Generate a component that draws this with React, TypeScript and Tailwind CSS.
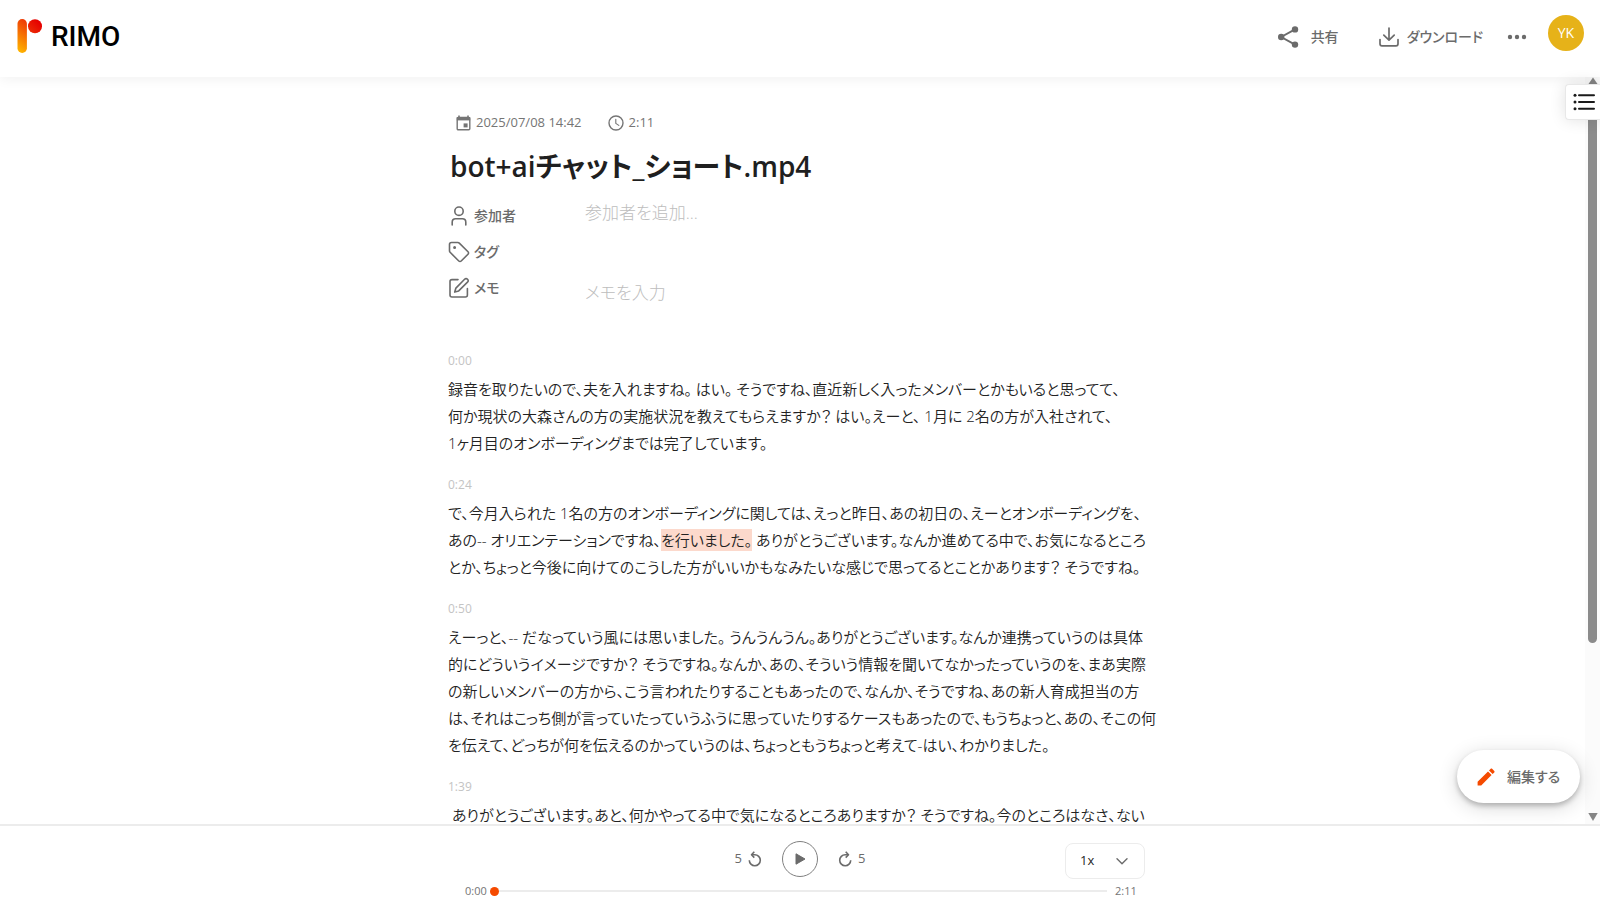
import { useState } from "react";

type Line = { text: string; mark?: string; rest?: string };
type Paragraph = { time: string; lines: Line[] };

const transcript: Paragraph[] = [
  {
    time: "0:00",
    lines: [
      { text: "録音を取りたいので、夫を入れますね。 はい。 そうですね、直近新しく入ったメンバーとかもいると思ってて、" },
      { text: "何か現状の大森さんの方の実施状況を教えてもらえますか？ はい。えーと、 1月に 2名の方が入社されて、" },
      { text: "1ヶ月目のオンボーディングまでは完了しています。" },
    ],
  },
  {
    time: "0:24",
    lines: [
      { text: "で、今月入られた 1名の方のオンボーディングに関しては、えっと昨日、あの初日の、えーとオンボーディングを、" },
      {
        text: "あの-- オリエンテーションですね、",
        mark: "を行いました。",
        rest: " ありがとうございます。なんか進めてる中で、お気になるところ",
      },
      { text: "とか、ちょっと今後に向けてのこうした方がいいかもなみたいな感じで思ってるとことかあります？ そうですね。" },
    ],
  },
  {
    time: "0:50",
    lines: [
      { text: "えーっと、-- だなっていう風には思いました。 うんうんうん。ありがとうございます。なんか連携っていうのは具体" },
      { text: "的にどういうイメージですか？ そうですね。なんか、あの、そういう情報を聞いてなかったっていうのを、まあ実際" },
      { text: "の新しいメンバーの方から、こう言われたりすることもあったので、なんか、そうですね、あの新人育成担当の方" },
      { text: "は、それはこっち側が言っていたっていうふうに思っていたりするケースもあったので、もうちょっと、あの、そこの何" },
      { text: "を伝えて、どっちが何を伝えるのかっていうのは、ちょっともうちょっと考えて-はい、わかりました。" },
    ],
  },
  {
    time: "1:39",
    lines: [
      { text: " ありがとうございます。あと、何かやってる中で気になるところありますか？ そうですね。今のところはなさ、ない" },
    ],
  },
];

const stroke = {
  fill: "none",
  stroke: "currentColor",
  strokeLinecap: "round" as const,
  strokeLinejoin: "round" as const,
};

function Logo() {
  return (
    <a href="#" className="flex items-center gap-2 text-black" aria-label="RIMO">
      <svg width="26" height="34" viewBox="0 0 26 34" aria-hidden="true">
        <defs>
          <linearGradient id="stem" x1="0.6" y1="0" x2="0.4" y2="1">
            <stop offset="0" stopColor="#ee3a06" />
            <stop offset="1" stopColor="#ffb400" />
          </linearGradient>
          <linearGradient id="dot" x1="0.8" y1="0.2" x2="0" y2="1">
            <stop offset="0" stopColor="#e60000" />
            <stop offset="1" stopColor="#ec3306" />
          </linearGradient>
        </defs>
        <rect x="0.5" y="0" width="9.4" height="34" rx="4.7" fill="url(#stem)" />
        <circle cx="18" cy="7.2" r="7" fill="url(#dot)" />
      </svg>
      <span className="pt-0.5 font-['Roboto',sans-serif] text-[28px] leading-8 font-medium">RIMO</span>
    </a>
  );
}

function Header() {
  return (
    <header className="relative z-10 flex h-[77px] shrink-0 items-start justify-between bg-white pr-4 pl-[17px] shadow-[0_2px_12px_rgba(0,0,0,0.06)]">
      <div className="pt-[19px]">
        <Logo />
      </div>
      <div className="flex items-start text-[#6b6b6b]">
        <button className="mt-[23px] flex h-7 items-center gap-3 text-sm font-medium">
          <svg width="22" height="24" viewBox="0 0 22 24" aria-hidden="true">
            <path d="M18 4.4 4.2 12 18 19.6" fill="none" stroke="currentColor" strokeWidth="1.9" />
            <circle cx="18" cy="4.4" r="3.2" fill="currentColor" />
            <circle cx="4.2" cy="12" r="3.2" fill="currentColor" />
            <circle cx="18" cy="19.6" r="3.2" fill="currentColor" />
          </svg>
          共有
        </button>
        <button className="mt-[23px] ml-10 flex h-7 items-center gap-2 text-sm font-medium">
          <svg width="20" height="20" viewBox="0 0 20 20" {...stroke} strokeWidth="1.7" aria-hidden="true">
            <path d="M1 12.5v4.2C1 18 1.9 18.8 3 18.8h14c1.1 0 2-.8 2-2.1v-4.2" />
            <path d="M10 1v12M4.8 8.200 10 13.200l5.200-5" />
          </svg>
          ダウンロード
        </button>
        <button className="mt-[23px] ml-6 flex h-7 items-center" aria-label="メニュー">
          <svg width="20" height="6" viewBox="0 0 20 6" fill="currentColor" aria-hidden="true">
            <circle cx="3" cy="3" r="2.2" />
            <circle cx="10" cy="3" r="2.2" />
            <circle cx="17" cy="3" r="2.2" />
          </svg>
        </button>
        <button className="mt-[15px] ml-[21px] flex size-9 items-center justify-center rounded-full bg-[#e6b219] font-['Open_Sans',sans-serif] text-sm text-white">
          YK
        </button>
      </div>
    </header>
  );
}

function Details() {
  return (
    <section>
      <div className="flex h-6 items-center gap-[26px] pl-2 text-[13px] text-[#757575]">
        <div className="flex items-center gap-[5px]">
          <svg width="15" height="16" viewBox="0 0 15 16" aria-hidden="true">
            <path d="M3 .5v2M12 .5v2" stroke="currentColor" strokeWidth="1.6" />
            <rect x="1.2" y="2.4" width="12.6" height="12.4" rx="1" fill="none" stroke="currentColor" strokeWidth="1.4" />
            <path d="M.8 2h13.400v3.400H.8z" fill="currentColor" />
            <path d="M7.600 8.400h4v4h-4z" fill="currentColor" />
          </svg>
          <time>2025/07/08 14:42</time>
        </div>
        <div className="flex items-center gap-[5px]">
          <svg width="16" height="16" viewBox="0 0 16 16" {...stroke} strokeWidth="1.4" aria-hidden="true">
            <circle cx="8" cy="8" r="7" />
            <path d="M7.800 4.200v4.200l3 2" strokeWidth="1.1" />
          </svg>
          <span>2:11</span>
        </div>
      </div>
      <h1 className="mt-[11px] pl-0.5 text-[28px] leading-10 font-semibold whitespace-nowrap text-[#1f1f1f]">
        bot+aiチャット_ショート.mp4
      </h1>
      <div className="mt-4 grid grid-cols-[137px_1fr] gap-y-2 text-sm text-[#6b6b6b]">
        <label htmlFor="members" className="flex h-7 items-center gap-1 font-medium">
          <svg width="22" height="22" viewBox="0 0 22 22" {...stroke} strokeWidth="1.6" aria-hidden="true">
            <circle cx="11" cy="6.2" r="4.2" />
            <path d="M4.200 20v-2.800c0-2 1.600-3.400 3.400-3.400h6.800c1.800 0 3.400 1.400 3.400 3.400V20" />
          </svg>
          参加者
        </label>
        <input
          id="members"
          placeholder="参加者を追加..."
          className="h-[22px] bg-transparent text-[17px] font-light outline-none placeholder:text-[#bdbdbd]"
        />
        <div className="flex h-7 items-center gap-1 font-medium">
          <svg width="22" height="22" viewBox="0 0 22 22" {...stroke} strokeWidth="1.6" aria-hidden="true">
            <path d="M1.500 3.500c0-1.100.9-2 2-2h6.300c.6 0 1.100.2 1.500.6l8.700 8.700c.7.700.7 1.700 0 2.400l-6.800 6.800c-.7.700-1.700.7-2.400 0L2.100 11.300c-.4-.4-.6-.9-.6-1.500z" />
            <circle cx="6.6" cy="6.6" r="0.7" fill="currentColor" />
          </svg>
          タグ
        </div>
        <div />
        <label htmlFor="memo" className="flex h-7 items-center gap-1 font-medium">
          <svg width="22" height="22" viewBox="0 0 22 22" {...stroke} strokeWidth="1.6" aria-hidden="true">
            <path d="M10 2.600H4c-1.100 0-2 .9-2 2V18c0 1.100.9 2 2 2h13.400c1.100 0 2-.9 2-2v-6.500" />
            <path d="M16.600 2.200c.8-.8 2.100-.8 2.900 0s.8 2.100 0 2.900l-8.800 8.800-4 1.200 1.200-4z" />
          </svg>
          メモ
        </label>
        <textarea
          id="memo"
          placeholder="メモを入力"
          rows={1}
          className="mt-[3px] h-8 resize-none bg-transparent text-[17px] leading-8 font-light outline-none placeholder:text-[#bdbdbd]"
        />
      </div>
    </section>
  );
}

function Transcript() {
  return (
    <section className="mt-10">
      {transcript.map((p) => (
        <article key={p.time} className="pb-4">
          <time className="block h-[27px] text-xs leading-6 text-[#c4c4c4]">{p.time}</time>
          <p className="text-[15px] leading-[27px] font-[350] whitespace-pre text-[#222]">
            {p.lines.map((l) => (
              <span key={l.text} className="block">
                {l.text}
                {l.mark && <mark className="bg-[#fcd9cc] py-px text-inherit">{l.mark}</mark>}
                {l.rest}
              </span>
            ))}
          </p>
        </article>
      ))}
    </section>
  );
}

function ScrollRail() {
  return (
    <div className="flex w-[15px] shrink-0 flex-col items-center justify-between bg-[#fbfbfb] text-[#858585]" aria-hidden="true">
      <svg width="10" height="7" viewBox="0 0 10 7" fill="currentColor">
        <path d="M5 .5 9.500 7h-9z" />
      </svg>
      <div className="w-[9px] grow-[560] rounded-full bg-[#8b8b8b]" />
      <div className="grow-[170]" />
      <svg width="10" height="11" viewBox="0 0 10 11" fill="currentColor">
        <path d="M.3 0h9.400L5 8z" />
      </svg>
    </div>
  );
}

function Player() {
  const [position, setPosition] = useState(0);
  return (
    <footer className="h-[88px] shrink-0 border-t-2 border-[#ececec] bg-white text-[#6b6b6b]">
      <div className="mx-auto max-w-[690px] pt-[13px]">
        <div className="grid grid-cols-[1fr_auto_1fr] items-center">
          <div />
          <div className="flex items-center gap-5 text-[13px]">
            <button className="flex items-center gap-1.5" aria-label="5秒戻る">
              5
              <svg width="14" height="16" viewBox="0 0 14 16" {...stroke} strokeLinecap="butt" strokeWidth="1.6" aria-hidden="true">
                <path d="M1.300 9.200A5.500 5.500 0 1 0 6.800 3.700H4" />
                <path d="M6.300.8 3.500 3.700l2.800 2.900" />
              </svg>
            </button>
            <button
              className="flex size-9 items-center justify-center rounded-full border border-[#808080]"
              aria-label="再生"
            >
              <svg width="12" height="12" viewBox="0 0 12 12" aria-hidden="true">
                <path d="M2 .8v10.400L11 6z" fill="currentColor" stroke="currentColor" strokeLinejoin="round" />
              </svg>
            </button>
            <button className="flex items-center gap-1.5" aria-label="5秒進む">
              <svg width="14" height="16" viewBox="0 0 14 16" {...stroke} strokeLinecap="butt" strokeWidth="1.6" aria-hidden="true">
                <path d="M12.700 9.200A5.500 5.500 0 1 1 7.200 3.700H10" />
                <path d="M7.700.8l2.800 2.900-2.800 2.900" />
              </svg>
              5
            </button>
          </div>
          <div className="relative mt-1 justify-self-end">
            <select
              aria-label="再生速度"
              className="h-9 w-20 appearance-none rounded-lg border border-[#ececec] bg-white pl-3.5 text-[13px] text-[#1f1f1f] outline-none"
            >
              <option>1x</option>
              <option>1.5x</option>
              <option>2x</option>
            </select>
            <svg
              className="pointer-events-none absolute top-[15px] right-[17px]"
              width="12"
              height="7"
              viewBox="0 0 12 7"
              {...stroke}
              strokeWidth="1.4"
              aria-hidden="true"
            >
              <path d="m1 .8 5 5 5-5" />
            </svg>
          </div>
        </div>
        <div className="mt-1 flex h-4 items-center px-2.5 text-[11px] text-[#757575]">
          <span className="w-[25px]">0:00</span>
          <input
            type="range"
            aria-label="再生位置"
            min={0}
            max={131}
            value={position}
            onChange={(e) => setPosition(Number(e.target.value))}
            className="h-[9px] min-w-0 flex-1 appearance-none bg-transparent [&::-webkit-slider-runnable-track]:h-[2px] [&::-webkit-slider-runnable-track]:bg-[#ececec] [&::-webkit-slider-thumb]:-mt-[3.5px] [&::-webkit-slider-thumb]:size-[9px] [&::-webkit-slider-thumb]:appearance-none [&::-webkit-slider-thumb]:rounded-full [&::-webkit-slider-thumb]:bg-[#f54a00]"
          />
          <span className="ml-2 w-5">2:11</span>
        </div>
      </div>
    </footer>
  );
}

export default function App() {
  return (
    <div className="flex h-screen flex-col overflow-hidden bg-white font-['Open_Sans','Noto_Sans_CJK_JP',sans-serif] [font-feature-settings:'palt']">
      <Header />
      <div className="relative flex min-h-0 flex-1">
        <main className="min-w-0 flex-1 overflow-hidden">
          <div className="mx-auto max-w-[689px] pt-[34px]">
            <Details />
            <Transcript />
          </div>
        </main>
        <ScrollRail />
        <button
          aria-label="目次"
          className="absolute top-[7px] right-0 z-20 flex h-9 w-[35px] items-center justify-center rounded-l border border-r-0 border-[#e8e8e8] bg-white pl-0.5 text-[#1a1a1a] shadow-[0_0_16px_rgba(0,0,0,0.12)]"
        >
          <svg width="22" height="18" viewBox="0 0 22 18" aria-hidden="true">
            <path d="M6 2.200h15M6 9h15M6 15.800h15" fill="none" stroke="currentColor" strokeWidth="2" strokeLinecap="round" />
            <circle cx="2" cy="2.2" r="1.5" fill="currentColor" />
            <circle cx="2" cy="9" r="1.5" fill="currentColor" />
            <circle cx="2" cy="15.8" r="1.5" fill="currentColor" />
          </svg>
        </button>
        <button className="absolute right-5 bottom-[21px] flex h-[53px] w-[123px] items-center justify-center gap-3 rounded-full bg-white text-sm font-medium text-[#6b6b6b] shadow-[0_3px_5px_rgba(0,0,0,0.22),0_4px_20px_rgba(0,0,0,0.16)]">
          <svg width="18" height="18" viewBox="0 0 18 18" fill="#f54a00" aria-hidden="true">
            <path d="M.6 13.800 11 3.400l3.600 3.600L4.200 17.400H.6zM12 2.400 13.700.8c.4-.4 1-.4 1.400 0l2.200 2.200c.4.4.4 1 0 1.400L15.600 6z" />
          </svg>
          編集する
        </button>
      </div>
      <Player />
    </div>
  );
}
